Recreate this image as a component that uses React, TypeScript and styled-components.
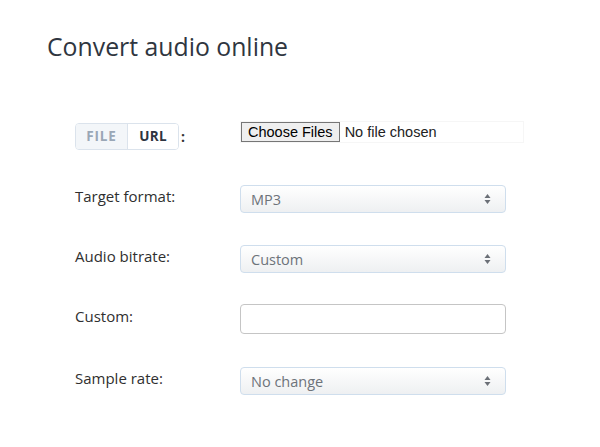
import styled, { createGlobalStyle } from "styled-components";

const GlobalStyle = createGlobalStyle`
  body {
    margin: 0;
    background: #ffffff;
    font-family: "Open Sans", sans-serif;
    color: #333333;
  }
`;

const Arrows = () => (
  <svg width="7" height="12" viewBox="0 0 7 12">
    <path d="M3.5 1 L6.5 5 L0.5 5 Z" fill="#6b7077" />
    <path d="M3.5 11 L6.5 7 L0.5 7 Z" fill="#6b7077" />
  </svg>
);

const App = () => {
  return (
    <Page>
      <GlobalStyle />
      <Title>Convert audio online</Title>
      <Form>
        <Row gap={33}>
          <LabelCell>
            <SourceToggle>
              <ToggleTab active={false}>FILE</ToggleTab>
              <ToggleTab active={true}>URL</ToggleTab>
            </SourceToggle>
            <Colon>:</Colon>
          </LabelCell>
          <FileField>
            <ChooseButton>Choose Files</ChooseButton>
            <FileStatus>No file chosen</FileStatus>
          </FileField>
        </Row>
        <Row>
          <Label>Target format:</Label>
          <Select>
            <SelectText>MP3</SelectText>
            <Arrows />
          </Select>
        </Row>
        <Row>
          <Label>Audio bitrate:</Label>
          <Select>
            <SelectText>Custom</SelectText>
            <Arrows />
          </Select>
        </Row>
        <Row gap={32}>
          <Label>Custom:</Label>
          <TextInput type="text" />
        </Row>
        <Row>
          <Label>Sample rate:</Label>
          <Select>
            <SelectText>No change</SelectText>
            <Arrows />
          </Select>
        </Row>
      </Form>
    </Page>
  );
};

const Page = styled.div`
  width: 600px;
  height: 447px;
  padding: 29px 0 0 47px;
  box-sizing: border-box;
`;

const Title = styled.h1`
  margin: 0;
  font-family: "Open Sans", sans-serif;
  font-size: 24.8px;
  font-weight: 400;
  line-height: 34px;
  color: #2f3640;
`;

const Form = styled.div`
  display: flex;
  flex-direction: column;
  margin-top: 58px;
  margin-left: 28px;
`;

const Row = styled.div<{ gap?: number }>`
  display: grid;
  grid-template-columns: 165px 1fr;
  align-items: center;
  height: 30px;
  margin-bottom: ${({ gap }) => gap ?? 30}px;
`;

const LabelCell = styled.div`
  display: flex;
  align-items: center;
`;

const SourceToggle = styled.div`
  display: flex;
  border: 1px solid #dbe3ec;
  border-radius: 4px;
  overflow: hidden;
  height: 25px;
`;

const ToggleTab = styled.div<{ active: boolean }>`
  display: flex;
  align-items: center;
  justify-content: center;
  width: ${({ active }) => (active ? "50px" : "51px")};
  font-size: 13.5px;
  font-weight: 700;
  letter-spacing: ${({ active }) => (active ? "0.3px" : "0.8px")};
  color: ${({ active }) => (active ? "#2e3440" : "#9aa7b6")};
  background: ${({ active }) => (active ? "#ffffff" : "#f3f6f9")};
  border-left: ${({ active }) => (active ? "1px solid #dbe3ec" : "none")};
`;

const Colon = styled.span`
  margin-left: 2px;
  font-size: 14px;
  font-weight: 700;
`;

const Label = styled.div`
  margin-bottom: 7px;
  font-size: 15px;
  font-weight: 400;
  color: #2f2f2f;
`;

const FileField = styled.div`
  align-self: start;
  display: flex;
  align-items: center;
  width: 282px;
  height: 20px;
  border: 1px solid #f6f6f6;
  font-family: "Liberation Sans", Arial, sans-serif;
  font-size: 14.5px;
`;

const ChooseButton = styled.button`
  height: 20px;
  padding: 0 6px;
  margin: 0;
  font-family: "Liberation Sans", Arial, sans-serif;
  font-size: 14.5px;
  color: #000000;
  background: #efefef;
  border: 1px solid #767676;
  border-radius: 0;
`;

const FileStatus = styled.span`
  margin-left: 5px;
  color: #222222;
`;

const Select = styled.div`
  display: flex;
  align-items: center;
  justify-content: space-between;
  box-sizing: border-box;
  width: 266px;
  height: 28px;
  padding: 0 14px 0 10px;
  border: 1px solid #cfdeed;
  border-radius: 4px;
  background: linear-gradient(#ffffff, #eef0f2);
`;

const SelectText = styled.span`
  font-size: 14.5px;
  color: #6d737a;
`;

const TextInput = styled.input`
  box-sizing: border-box;
  width: 266px;
  height: 30px;
  margin: 0;
  border: 1px solid #c5c5c5;
  border-radius: 4px;
  background: #ffffff;
  outline: none;
`;

export default App;
